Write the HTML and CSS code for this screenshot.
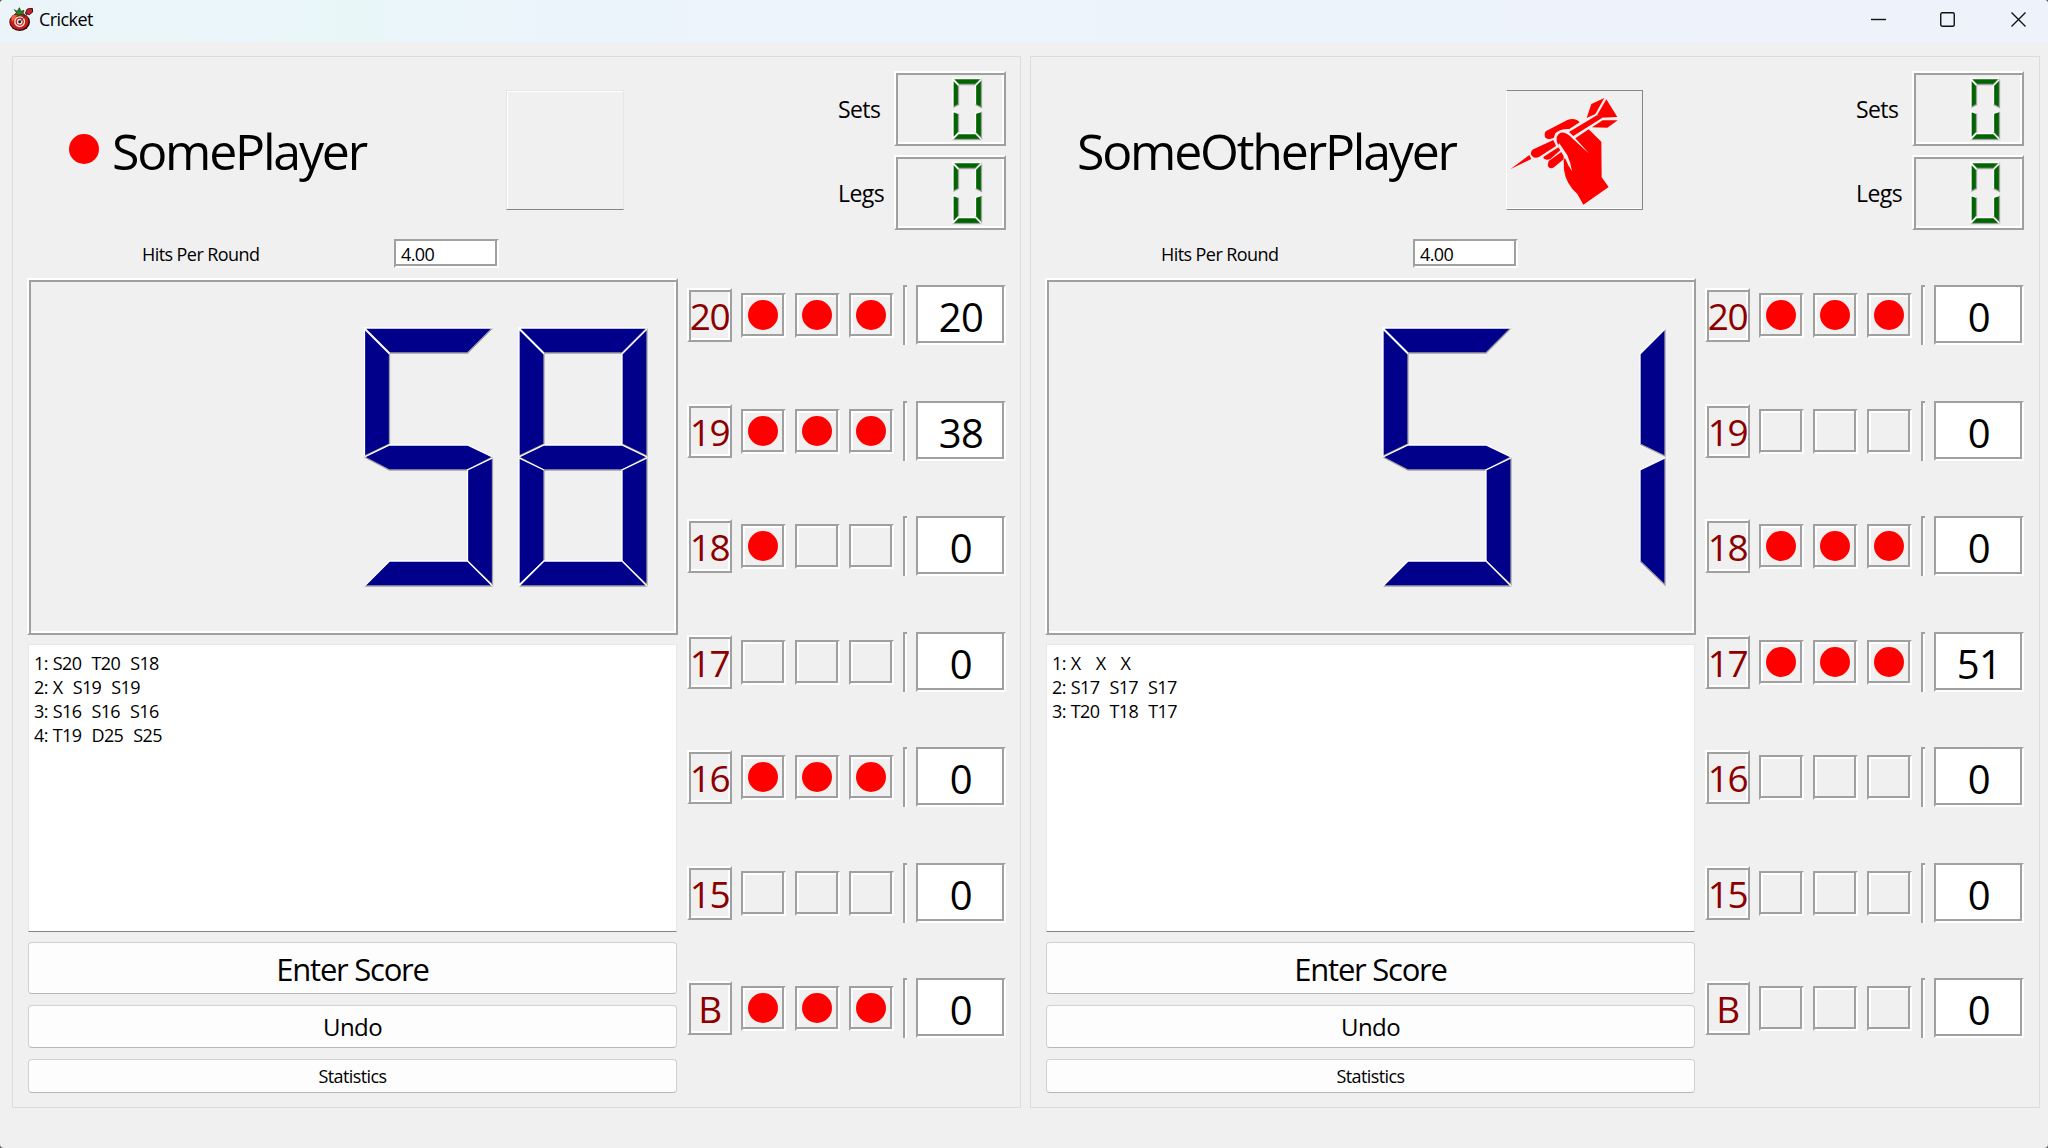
FILE: index.html
```html
<!DOCTYPE html>
<html lang="en">
<head>
<meta charset="utf-8">
<title>Cricket</title>
<link rel="stylesheet" href="styles.css">
</head>
<body>
<svg class="defs" width="0" height="0">
  <defs>
    <g id="big-a"><path class="fill" d="M0 0H128L103 25H25Z"/><path class="dark" d="M128 0L103 25H25"/><path class="light" d="M128 0H0L25 25"/></g>
    <g id="big-f"><path class="fill" d="M0 1L25 26V116L0 128Z"/><path class="dark" d="M25 26V116L0 128"/><path class="light" d="M25 26L0 1V128"/></g>
    <g id="big-b"><path class="fill" d="M128 1V128L103 116V26Z"/><path class="dark" d="M128 1V128L103 116"/><path class="light" d="M103 116V26L128 1"/></g>
    <g id="big-g"><path class="fill" d="M0 129L25 117H103L128 129L103 142H25Z"/><path class="dark" d="M128 129L103 142H25L0 129"/><path class="light" d="M0 129L25 117H103L128 129"/></g>
    <g id="big-e"><path class="fill" d="M0 130L25 142V233L0 257Z"/><path class="dark" d="M25 142V233"/><path class="light" d="M25 142L0 130V257L25 233"/></g>
    <g id="big-c"><path class="fill" d="M128 130V257L103 233V142Z"/><path class="dark" d="M128 130V257L103 233"/><path class="light" d="M103 233V142L128 130"/></g>
    <g id="big-d"><path class="fill" d="M0 258L25 233H103L128 258Z"/><path class="dark" d="M0 258H128"/><path class="light" d="M0 258L25 233H103L128 258"/></g>
    <g id="zero">
      <path class="fill" d="M0 0H29L23 6H6Z"/><path class="dark" d="M29 0L23 6H6"/><path class="light" d="M29 0H0L6 6"/>
      <path class="fill" d="M.5 1L6 7V26L.5 29Z"/><path class="dark" d="M6 7V26L.5 29"/><path class="light" d="M6 7L.5 1V29"/>
      <path class="fill" d="M29 1V29L23 26V7Z"/><path class="dark" d="M29 1V29L23 26"/><path class="light" d="M23 26V7L29 1"/>
      <path class="fill" d="M.5 33L6 35V54L.5 60Z"/><path class="dark" d="M6 35V54"/><path class="light" d="M6 35L.5 33V60L6 54"/>
      <path class="fill" d="M29 33V60L23 54V35Z"/><path class="dark" d="M29 33V60L23 54"/><path class="light" d="M23 54V35L29 33"/>
      <path class="fill" d="M0 61L6 55H23L29 61Z"/><path class="dark" d="M0 61H29"/><path class="light" d="M0 61L6 55H23L29 61"/>
    </g>
  </defs>
</svg>
<div class="window">
  <header class="titlebar">
    <svg class="app-icon" viewBox="24 20 78 75" width="26" height="25">
      <ellipse cx="59" cy="65" rx="31" ry="27" fill="#2a0508"/>
      <ellipse cx="58" cy="63" rx="28" ry="25" fill="#c81d16"/>
      <path d="M34 52Q40 40 52 42L44 56L36 64Z" fill="#f4633f"/>
      <circle cx="59" cy="64" r="14.500" fill="none" stroke="#e8e4e4" stroke-width="4"/>
      <circle cx="59" cy="64" r="6.500" fill="#222" stroke="#e8e4e4" stroke-width="4"/>
      <path d="M59 65L82 40" stroke="#333" stroke-width="3"/>
      <path d="M43 28L52 33L58 22L63 33L72 30L69 40L75 45L62 42L56 47L52 41L44 44L49 36Z" fill="#2f7d22" stroke="#18350f" stroke-width="2"/>
      <path d="M76 39L82 26L97 24L98 35L88 43Z" fill="#c4232a" stroke="#46090f" stroke-width="3"/>
    </svg>
    <span class="title">Cricket</span>
    <div class="controls">
      <svg width="15" height="16" viewBox="0 0 15 16"><path d="M0 7.500H15"/></svg>
      <svg width="15" height="16" viewBox="0 0 15 16"><rect x=".75" y=".75" width="13.500" height="13.500" rx="1.500"/></svg>
      <svg width="15" height="16" viewBox="0 0 15 16"><path d="M.5.500L14.500 14.500M14.500.500L.5 14.500"/></svg>
    </div>
  </header>
  <main class="players">
    <section class="player">
      <div class="head">
        <div class="name starts"><i class="dot"></i><span>SomePlayer</span></div>
        <div class="turn idle"></div>
        <dl class="tally">
          <dt>Sets</dt><dd class="raised"><svg class="green" width="104" height="67"><use href="#zero" x="54.500" y="3.500"/></svg></dd>
          <dt>Legs</dt><dd class="raised"><svg class="green" width="104" height="67"><use href="#zero" x="54.500" y="3.500"/></svg></dd>
        </dl>
      </div>
      <div class="average"><span>Hits Per Round</span><output class="sunken">4.00</output></div>
      <div class="body">
        <div class="main">
          <div class="score raised"><svg class="blue" width="643" height="349">
            <g transform="translate(333.500 46)"><use href="#big-a"/><use href="#big-f"/><use href="#big-g"/><use href="#big-c"/><use href="#big-d"/></g>
            <g transform="translate(488 46)"><use href="#big-a"/><use href="#big-f"/><use href="#big-b"/><use href="#big-g"/><use href="#big-e"/><use href="#big-c"/><use href="#big-d"/></g>
          </svg></div>
          <pre class="log">1: S20  T20  S18
2: X  S19  S19
3: S16  S16  S16
4: T19  D25  S25</pre>
          <button class="btn enter">Enter Score</button>
          <button class="btn undo">Undo</button>
          <button class="btn stats">Statistics</button>
        </div>
        <div class="marks">
          <div class="row"><b class="num raised">20</b><i class="cell sunken hit"></i><i class="cell sunken hit"></i><i class="cell sunken hit"></i><i class="bar"></i><span class="value sunken">20</span></div>
          <div class="row"><b class="num raised">19</b><i class="cell sunken hit"></i><i class="cell sunken hit"></i><i class="cell sunken hit"></i><i class="bar"></i><span class="value sunken">38</span></div>
          <div class="row"><b class="num raised">18</b><i class="cell sunken hit"></i><i class="cell sunken"></i><i class="cell sunken"></i><i class="bar"></i><span class="value sunken">0</span></div>
          <div class="row"><b class="num raised">17</b><i class="cell sunken"></i><i class="cell sunken"></i><i class="cell sunken"></i><i class="bar"></i><span class="value sunken">0</span></div>
          <div class="row"><b class="num raised">16</b><i class="cell sunken hit"></i><i class="cell sunken hit"></i><i class="cell sunken hit"></i><i class="bar"></i><span class="value sunken">0</span></div>
          <div class="row"><b class="num raised">15</b><i class="cell sunken"></i><i class="cell sunken"></i><i class="cell sunken"></i><i class="bar"></i><span class="value sunken">0</span></div>
          <div class="row"><b class="num raised">B</b><i class="cell sunken hit"></i><i class="cell sunken hit"></i><i class="cell sunken hit"></i><i class="bar"></i><span class="value sunken">0</span></div>
        </div>
      </div>
    </section>
    <section class="player second">
      <div class="head">
        <div class="name"><span>SomeOtherPlayer</span></div>
        <div class="turn active">
          <svg viewBox="81 93 405 351" width="135" height="117">
            <g fill="#f00">
              <path d="M91 328L148 285L154 297Z"/>
              <path d="M160 268L220 240L228 258L178 290Q160 299 153 283Q152 272 160 268Z"/>
              <path d="M200 212L262 180Q285 172 299 187L268 207Q240 206 226 220L221 234L206 238Q188 232 196 215Z"/>
              <path d="M191 290L235 262L241 271L211 297Q197 303 190 294Z"/>
              <path d="M206 303L244 276L251 288V298L222 322Q208 330 203 315Z"/>
              <path d="M230 232Q236 216 252 218Q262 220 270 228L326 280L286 235L326 208L364 245L365 352L386 381L310 434L292 402Q258 372 252 330L251 300L256 292L234 254Q228 244 230 232Z"/>
              <path d="M320 174L334 132L373 114L346 162Z"/>
              <path d="M379 118L412 171L362 173L352 164Z"/>
              <path d="M336 202L368 181H413L382 203Z"/>
              <path d="M267 216L352 165L367 173L280 228Z"/>
            </g>
            <path d="M238 250L262 286Q272 308 276 334Q263 316 258 300L234 256Z" fill="#f0f0f0"/>
            <path d="M270 228L327 280L285 238Z" fill="#f0f0f0"/>
          </svg>
        </div>
        <dl class="tally">
          <dt>Sets</dt><dd class="raised"><svg class="green" width="104" height="67"><use href="#zero" x="54.500" y="3.500"/></svg></dd>
          <dt>Legs</dt><dd class="raised"><svg class="green" width="104" height="67"><use href="#zero" x="54.500" y="3.500"/></svg></dd>
        </dl>
      </div>
      <div class="average"><span>Hits Per Round</span><output class="sunken">4.00</output></div>
      <div class="body">
        <div class="main">
          <div class="score raised"><svg class="blue" width="643" height="349">
            <g transform="translate(334 46)"><use href="#big-a"/><use href="#big-f"/><use href="#big-g"/><use href="#big-c"/><use href="#big-d"/></g>
            <g transform="translate(488 46)"><use href="#big-b"/><use href="#big-c"/></g>
          </svg></div>
          <pre class="log">1: X   X   X
2: S17  S17  S17
3: T20  T18  T17</pre>
          <button class="btn enter">Enter Score</button>
          <button class="btn undo">Undo</button>
          <button class="btn stats">Statistics</button>
        </div>
        <div class="marks">
          <div class="row"><b class="num raised">20</b><i class="cell sunken hit"></i><i class="cell sunken hit"></i><i class="cell sunken hit"></i><i class="bar"></i><span class="value sunken">0</span></div>
          <div class="row"><b class="num raised">19</b><i class="cell sunken"></i><i class="cell sunken"></i><i class="cell sunken"></i><i class="bar"></i><span class="value sunken">0</span></div>
          <div class="row"><b class="num raised">18</b><i class="cell sunken hit"></i><i class="cell sunken hit"></i><i class="cell sunken hit"></i><i class="bar"></i><span class="value sunken">0</span></div>
          <div class="row"><b class="num raised">17</b><i class="cell sunken hit"></i><i class="cell sunken hit"></i><i class="cell sunken hit"></i><i class="bar"></i><span class="value sunken">51</span></div>
          <div class="row"><b class="num raised">16</b><i class="cell sunken"></i><i class="cell sunken"></i><i class="cell sunken"></i><i class="bar"></i><span class="value sunken">0</span></div>
          <div class="row"><b class="num raised">15</b><i class="cell sunken"></i><i class="cell sunken"></i><i class="cell sunken"></i><i class="bar"></i><span class="value sunken">0</span></div>
          <div class="row"><b class="num raised">B</b><i class="cell sunken"></i><i class="cell sunken"></i><i class="cell sunken"></i><i class="bar"></i><span class="value sunken">0</span></div>
        </div>
      </div>
    </section>
  </main>
</div>
</body>
</html>
```
FILE: styles.css
```css
* { box-sizing: border-box; }
html { background: #5a5d60; }
body {
  margin: 0;
  font: 18px/24px "Open Sans", "Noto Sans", sans-serif;
  letter-spacing: -0.032em;
  color: #000;
}
.defs { position: absolute; }
.window {
  height: 1148px;
  background: #f0f0f0;
  border-radius: 4px;
  overflow: hidden;
}

.titlebar {
  display: flex;
  align-items: center;
  height: 42px;
  padding: 0 22px 3px 8px;
  background: linear-gradient(90deg, #ebf5f9, #e9f6f8 18%, #ecf4fb 27%, #edf3fb 60%, #eef3fb);
}
.title { margin: 0 0 2px 5px; }
.controls { display: flex; gap: 55px; margin-left: auto; }
.controls svg { fill: none; stroke: #111; stroke-width: 1.4; }
.controls svg:nth-child(2) { margin: 0 1px 0 -1px; }

.players { display: flex; gap: 9px; padding: 14px 8px 0 12px; }
.player {
  width: 1009px;
  height: 1052px;
  padding: 14px 14px 0 14px;
  border: 1px solid #dcdcdc;
}
.player.second { width: 1010px; padding-right: 15px; }

.raised, .sunken { border: 2px solid; }
.raised {
  border-color: #fff #a0a0a0 #a0a0a0 #fff;
  box-shadow: inset 2px 2px #a0a0a0, inset -2px -2px #fff;
}
.sunken {
  border-color: #a0a0a0 #fff #fff #a0a0a0;
  box-shadow: inset -2px -2px #a0a0a0, inset 2px 2px #fff;
}

.head { display: flex; height: 159px; }
.name {
  display: flex;
  align-items: center;
  width: 461px;
  padding-left: 32px;
  font-size: 50px;
  letter-spacing: -0.044em;
}
.name.starts { width: 479px; padding-left: 42px; }
.dot { width: 30px; height: 30px; margin: -3px 13px 0 0; border-radius: 50%; background: #f00; }
.turn { height: 120px; margin-top: 19px; }
.idle {
  width: 118px;
  border: 1px solid #e6e6e6;
  border-bottom-color: #858585;
  box-shadow: inset 1px 1px #fff;
}
.active {
  width: 137px;
  border: 1px solid #808890;
  border-left-color: #fff;
  box-shadow: inset 0 -1px #fff;
}
.active svg { display: block; }
.tally {
  display: grid;
  grid-template-columns: 56px 112px;
  grid-auto-rows: 75px;
  gap: 9px 0;
  align-items: center;
  margin: 0 0 0 auto;
  font-size: 23px;
}
.tally dd { height: 75px; margin: 0; padding: 2px; }
.tally svg, .score svg { display: block; }
.fill { stroke: none; }
.green { fill: #006400; }
.blue { fill: #00008b; }
.light, .dark { fill: none; stroke-width: 1.3; }
.light { stroke: #fff; }
.dark { stroke: #a0a0a0; }

.average {
  display: grid;
  grid-template-columns: 252px 105px;
  align-items: center;
  height: 29px;
  margin: 9px 0 10px 115px;
}
.second .average { margin-left: 116px; }
.average output { height: 29px; padding: 1px 0 0 5px; line-height: 24px; background: #fff; }

.body { display: flex; gap: 9px; }
.main { display: flex; flex-direction: column; width: 651px; }
.score { height: 357px; padding: 2px; }
.log {
  height: 288px;
  margin: 9px 1px 10px;
  padding: 6px 5px;
  border: 1px solid #e8e8e8;
  border-bottom-color: #858585;
  background: #fff;
  font: inherit;
  letter-spacing: -0.035em;
  word-spacing: 1px;
}
.btn {
  display: block;
  margin: 0 1px 11px;
  padding: 0;
  border: 1px solid #d0d0d0;
  border-bottom-color: #b8b8b8;
  border-radius: 4px;
  background: #fdfdfd;
  color: #000;
  font: inherit;
  letter-spacing: inherit;
}
.enter { height: 52px; padding-top: 2px; font-size: 31px; letter-spacing: -0.04em; }
.undo { height: 43px; font-size: 24px; }
.stats { height: 34px; }

.marks {
  display: flex;
  flex-direction: column;
  justify-content: space-between;
  height: 753px;
  margin-top: 7px;
}
.row { display: flex; height: 60px; }
.num {
  width: 45px;
  height: 54px;
  margin: 3px 9px 0 0;
  font-size: 37px;
  font-weight: 400;
  line-height: 52px;
  text-align: center;
  letter-spacing: -0.04em;
  color: #8b0000;
}
.cell {
  display: grid;
  place-items: center;
  width: 45px;
  height: 45px;
  margin: 8px 9px 0 0;
  padding: 0 1px 1px 0;
}
.hit::before { content: ""; width: 30px; height: 30px; border-radius: 50%; background: #f00; }
.bar { width: 4px; height: 60px; margin-right: 9px; border: solid #a0a0a0; border-width: 2px 0 0 2px; box-shadow: inset -2px 0 #fff; }
.value {
  width: 90px;
  background: #fff;
  font-size: 40px;
  line-height: 60px;
  text-align: center;
}
```
